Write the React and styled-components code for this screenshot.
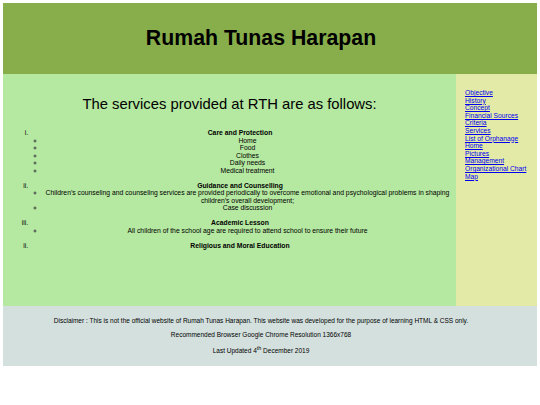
import React from 'react'
import styled, { createGlobalStyle } from 'styled-components'

const GlobalStyle = createGlobalStyle`
    body {
        margin: 3px;
        background: #fff;
        font-family: "Liberation Sans", Arial, sans-serif;
        color: #000;
    }
`

const Page = styled.div`
    width: 534px;
`

const Header = styled.header`
    height: 71px;
    background: #87ae4a;
    display: flex;
    align-items: center;
    justify-content: center;
    padding-right: 18px;
    box-sizing: border-box;
`

const Title = styled.h1`
    margin: 0;
    font-size: 21.3px;
    font-weight: bold;
`

const Body = styled.div`
    display: flex;
    height: 232px;
`

const Main = styled.main`
    flex: 1;
    background: #b5e8a1;
    padding: 22px 6px 0 6px;
`

const Heading = styled.h2`
    margin: 0 0 16px;
    font-size: 14.8px;
    font-weight: normal;
    text-align: center;
    line-height: 17px;
`

const Services = styled.ol`
    margin: 0;
    padding-left: 21px;
    font-size: 6.8px;
    line-height: 7.5px;
`

const Service = styled.li`
    text-align: center;
    margin-bottom: 7.5px;
`

const Subs = styled.ul`
    margin: 0;
    padding-left: 15px;
    list-style-type: circle;

    & li::marker {
        color: #444;
    }
`

const Aside = styled.aside`
    width: 81px;
    background: #e3eaa8;
    padding: 15px 0 0 9px;
    box-sizing: border-box;
`

const Nav = styled.ul`
    margin: 0;
    padding: 0;
    list-style: none;
    font-size: 6.7px;
    line-height: 7.6px;
`

const NavLink = styled.a`
    color: #0000ee;
    text-decoration: underline;
`

const Footer = styled.footer`
    background: #d4e0de;
    padding: 4.5px 18px 4.5px 0;
    text-align: center;
    font-size: 6.5px;
    line-height: 7.5px;
`

const Note = styled.p`
    margin: 6.5px 0;
`

const links = [
    'Objective', 'History', 'Concept', 'Financial Sources', 'Criteria', 'Services',
    'List of Orphanage', 'Home', 'Pictures', 'Management', 'Organizational Chart', 'Map',
]

const App = () => {
    return (
        <>
            <GlobalStyle />
            <Page>
                <Header>
                    <Title>Rumah Tunas Harapan</Title>
                </Header>
                <Body>
                    <Main>
                        <Heading>The services provided at RTH are as follows:</Heading>
                        <Services type="i">
                            <Service>
                                <b>Care and Protection</b>
                                <Subs>
                                    <li>Home</li>
                                    <li>Food</li>
                                    <li>Clothes</li>
                                    <li>Daily needs</li>
                                    <li>Medical treatment</li>
                                </Subs>
                            </Service>
                            <Service>
                                <b>Guidance and Counselling</b>
                                <Subs>
                                    <li>Children’s counseling and counseling services are provided periodically to overcome emotional and psychological problems in shaping children’s overall development;</li>
                                    <li>Case discussion</li>
                                </Subs>
                            </Service>
                            <Service>
                                <b>Academic Lesson</b>
                                <Subs>
                                    <li>All children of the school age are required to attend school to ensure their future</li>
                                </Subs>
                            </Service>
                        </Services>
                        <Services type="i" start={2}>
                            <Service>
                                <b>Religious and Moral Education</b>
                            </Service>
                        </Services>
                    </Main>
                    <Aside>
                        <Nav>
                            {links.map((l) => (
                                <li key={l}><NavLink href="#">{l}</NavLink></li>
                            ))}
                        </Nav>
                    </Aside>
                </Body>
                <Footer>
                    <Note>Disclaimer : This is not the official website of Rumah Tunas Harapan. This website was developed for the purpose of learning HTML &amp; CSS only.</Note>
                    <Note>Recommended Browser Google Chrome Resolution 1366x768</Note>
                    <Note>Last Updated 4<sup>th</sup> December 2019</Note>
                </Footer>
            </Page>
        </>
    )
}

export default App
